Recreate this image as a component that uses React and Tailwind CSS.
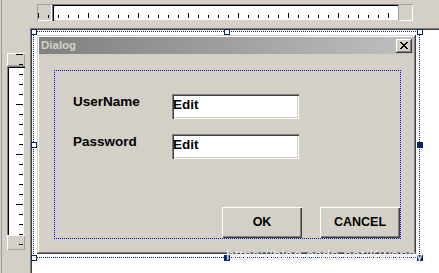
import React from "react";

const hTicks = Array.from({ length: 38 }, (_, k) => k);
const vTicks = Array.from({ length: 20 }, (_, k) => k);

function HRuler() {
  return (
    <div className="relative flex h-[17px] w-[376px]">
      <div className="h-full w-[15px] bg-[#d4d0c8] shadow-[inset_1px_1px_#a0a0a0,inset_-1px_-1px_#fff]" />
      <div className="h-full w-[346px] bg-white shadow-[inset_1px_1px_#808080,inset_2px_2px_#000,inset_0_-1px_#d4d0c8]" />
      <div className="h-full w-[15px] bg-[#d4d0c8] shadow-[inset_1px_1px_#a0a0a0,inset_-1px_-1px_#fff]" />
      <svg className="pointer-events-none absolute left-0 top-0" width="376" height="17" viewBox="0 0 376 17">
        {hTicks.map((k) => {
          const big = k % 5 === 0;
          const x = 1 + 10 * k;
          if (x > 360) return null;
          return <rect key={k} x={x} y={big ? 9 : 11} width="1" height={big ? 5 : 3} fill="#000" />;
        })}
      </svg>
    </div>
  );
}

function VRuler() {
  return (
    <div className="relative flex h-[197px] w-[18px] flex-col">
      <div className="h-[13px] w-full bg-[#d4d0c8] shadow-[inset_1px_1px_#fff,inset_-1px_-1px_#a0a0a0]" />
      <div className="h-[169px] w-full bg-white shadow-[inset_1px_1px_#808080,inset_2px_2px_#000,inset_-1px_0_#d4d0c8]" />
      <div className="h-[15px] w-full bg-[#d4d0c8] shadow-[inset_1px_1px_#fff,inset_-1px_-1px_#a0a0a0]" />
      <svg className="pointer-events-none absolute left-0 top-0" width="18" height="197" viewBox="0 0 18 197">
        {vTicks.map((k) => {
          const big = k % 5 === 0;
          const y = 1 + 10 * k;
          return <rect key={k} x={big ? 9 : 12} y={y} width={big ? 7 : 4} height="1" fill="#000" />;
        })}
      </svg>
    </div>
  );
}

function CloseButton() {
  const px = [
    [0, 0], [1, 0], [6, 0], [7, 0],
    [1, 1], [2, 1], [5, 1], [6, 1],
    [2, 2], [3, 2], [4, 2], [5, 2],
    [3, 3], [4, 3],
    [2, 4], [3, 4], [4, 4], [5, 4],
    [1, 5], [2, 5], [5, 5], [6, 5],
    [0, 6], [1, 6], [6, 6], [7, 6],
  ];
  return (
    <div className="flex h-[14px] w-[16px] items-center justify-center bg-[#d4d0c8] shadow-[inset_-1px_-1px_#404040,inset_1px_1px_#fff,inset_-2px_-2px_#808080]">
      <svg width="8" height="7" viewBox="0 0 8 7" className="-mt-px">
        {px.map(([x, y], i) => (
          <rect key={i} x={x} y={y} width="1" height="1" fill="#000" />
        ))}
      </svg>
    </div>
  );
}

function EditBox() {
  return (
    <div className="flex h-[25px] w-[127px] items-start bg-white pl-[1px] pt-[3px] shadow-[inset_1px_1px_#808080,inset_2px_2px_#404040,inset_-1px_-1px_#fff,inset_-2px_-2px_#d4d0c8]">
      <span className="text-[13.5px] font-bold leading-[16px] text-black">Edit</span>
    </div>
  );
}

function Button({ children }) {
  return (
    <div className="flex h-[31px] w-[80px] items-center justify-center bg-[#d4d0c8] shadow-[inset_1px_1px_#fff,inset_-1px_-1px_#404040,inset_-2px_-2px_#808080]">
      <span className="text-[12.5px] font-bold leading-none text-black">{children}</span>
    </div>
  );
}

function Handle({ className, filled }) {
  return (
    <div
      className={
        "absolute h-[6px] w-[6px] border border-[#0a246a] " +
        (filled ? "bg-[#0a246a] " : "bg-white ") +
        className
      }
    />
  );
}

function Dialog() {
  return (
    <div className="flex h-[219px] w-[379px] flex-col bg-[#d4d0c8] p-[2px] shadow-[inset_-1px_-1px_#404040,inset_1px_1px_#d4d0c8,inset_-2px_-2px_#808080,inset_2px_2px_#fff]">
      <div className="flex h-[17px] items-center justify-between bg-gradient-to-r from-[#808080] to-[#c0c0c0] pl-[2px] pr-[2px]">
        <span className="text-[11.5px] font-bold leading-none text-[#d4d0c8]">Dialog</span>
        <CloseButton />
      </div>
      <div className="flex-1 pl-[15px] pt-[16px]">
        <div className="flex h-[169px] w-[347px] flex-col border border-dotted border-[#0000ff]">
          <div className="mt-[23px] flex items-start pl-[18px]">
            <span className="w-[99px] text-[13.5px] font-bold leading-[16px] text-black">UserName</span>
            <EditBox />
          </div>
          <div className="mt-[15px] flex items-start pl-[18px]">
            <span className="w-[99px] text-[13.5px] font-bold leading-[16px] text-black">Password</span>
            <EditBox />
          </div>
          <div className="mt-auto flex justify-end gap-[18px]">
            <Button>OK</Button>
            <Button>CANCEL</Button>
          </div>
        </div>
      </div>
    </div>
  );
}

export default function App() {
  return (
    <div className="relative h-[273px] w-[439px] overflow-hidden bg-[#d4d0c8] pl-px font-['Liberation_Sans',Arial,sans-serif]">
      <div className="grid h-full grid-cols-[28px_1fr] grid-rows-[28px_1fr] border-l border-[#9c9990]">
        <div />
        <div className="pl-[7px] pt-[4px]">
          <HRuler />
        </div>
        <div className="pl-[5px] pt-[25px]">
          <VRuler />
        </div>
        <div className="bg-white pl-[3px] pt-[3px] shadow-[inset_1px_1px_#808080,inset_2px_2px_#404040]">
          <div className="relative w-fit border border-dotted border-[#0a246a] p-[3px]">
            <Dialog />
            <Handle className="-left-[3px] -top-[3px]" />
            <Handle className="left-[calc(50%-3px)] -top-[3px]" />
            <Handle className="-right-[4px] -top-[3px]" />
            <Handle className="-left-[3px] top-[calc(50%-3px)]" />
            <Handle className="-right-[4px] top-[calc(50%-3px)]" filled />
            <Handle className="-left-[3px] -bottom-[4px]" />
            <Handle className="left-[calc(50%-3px)] -bottom-[4px]" filled />
            <Handle className="-right-[4px] -bottom-[4px]" filled />
          </div>
        </div>
      </div>
      <div className="pointer-events-none absolute left-[226px] top-[246px] whitespace-nowrap text-[15.5px] leading-[18px] text-white/90 [text-shadow:0_0_1px_rgba(0,0,0,0.35)]">
        https://blog.csdn.net/Kwansy
      </div>
    </div>
  );
}
